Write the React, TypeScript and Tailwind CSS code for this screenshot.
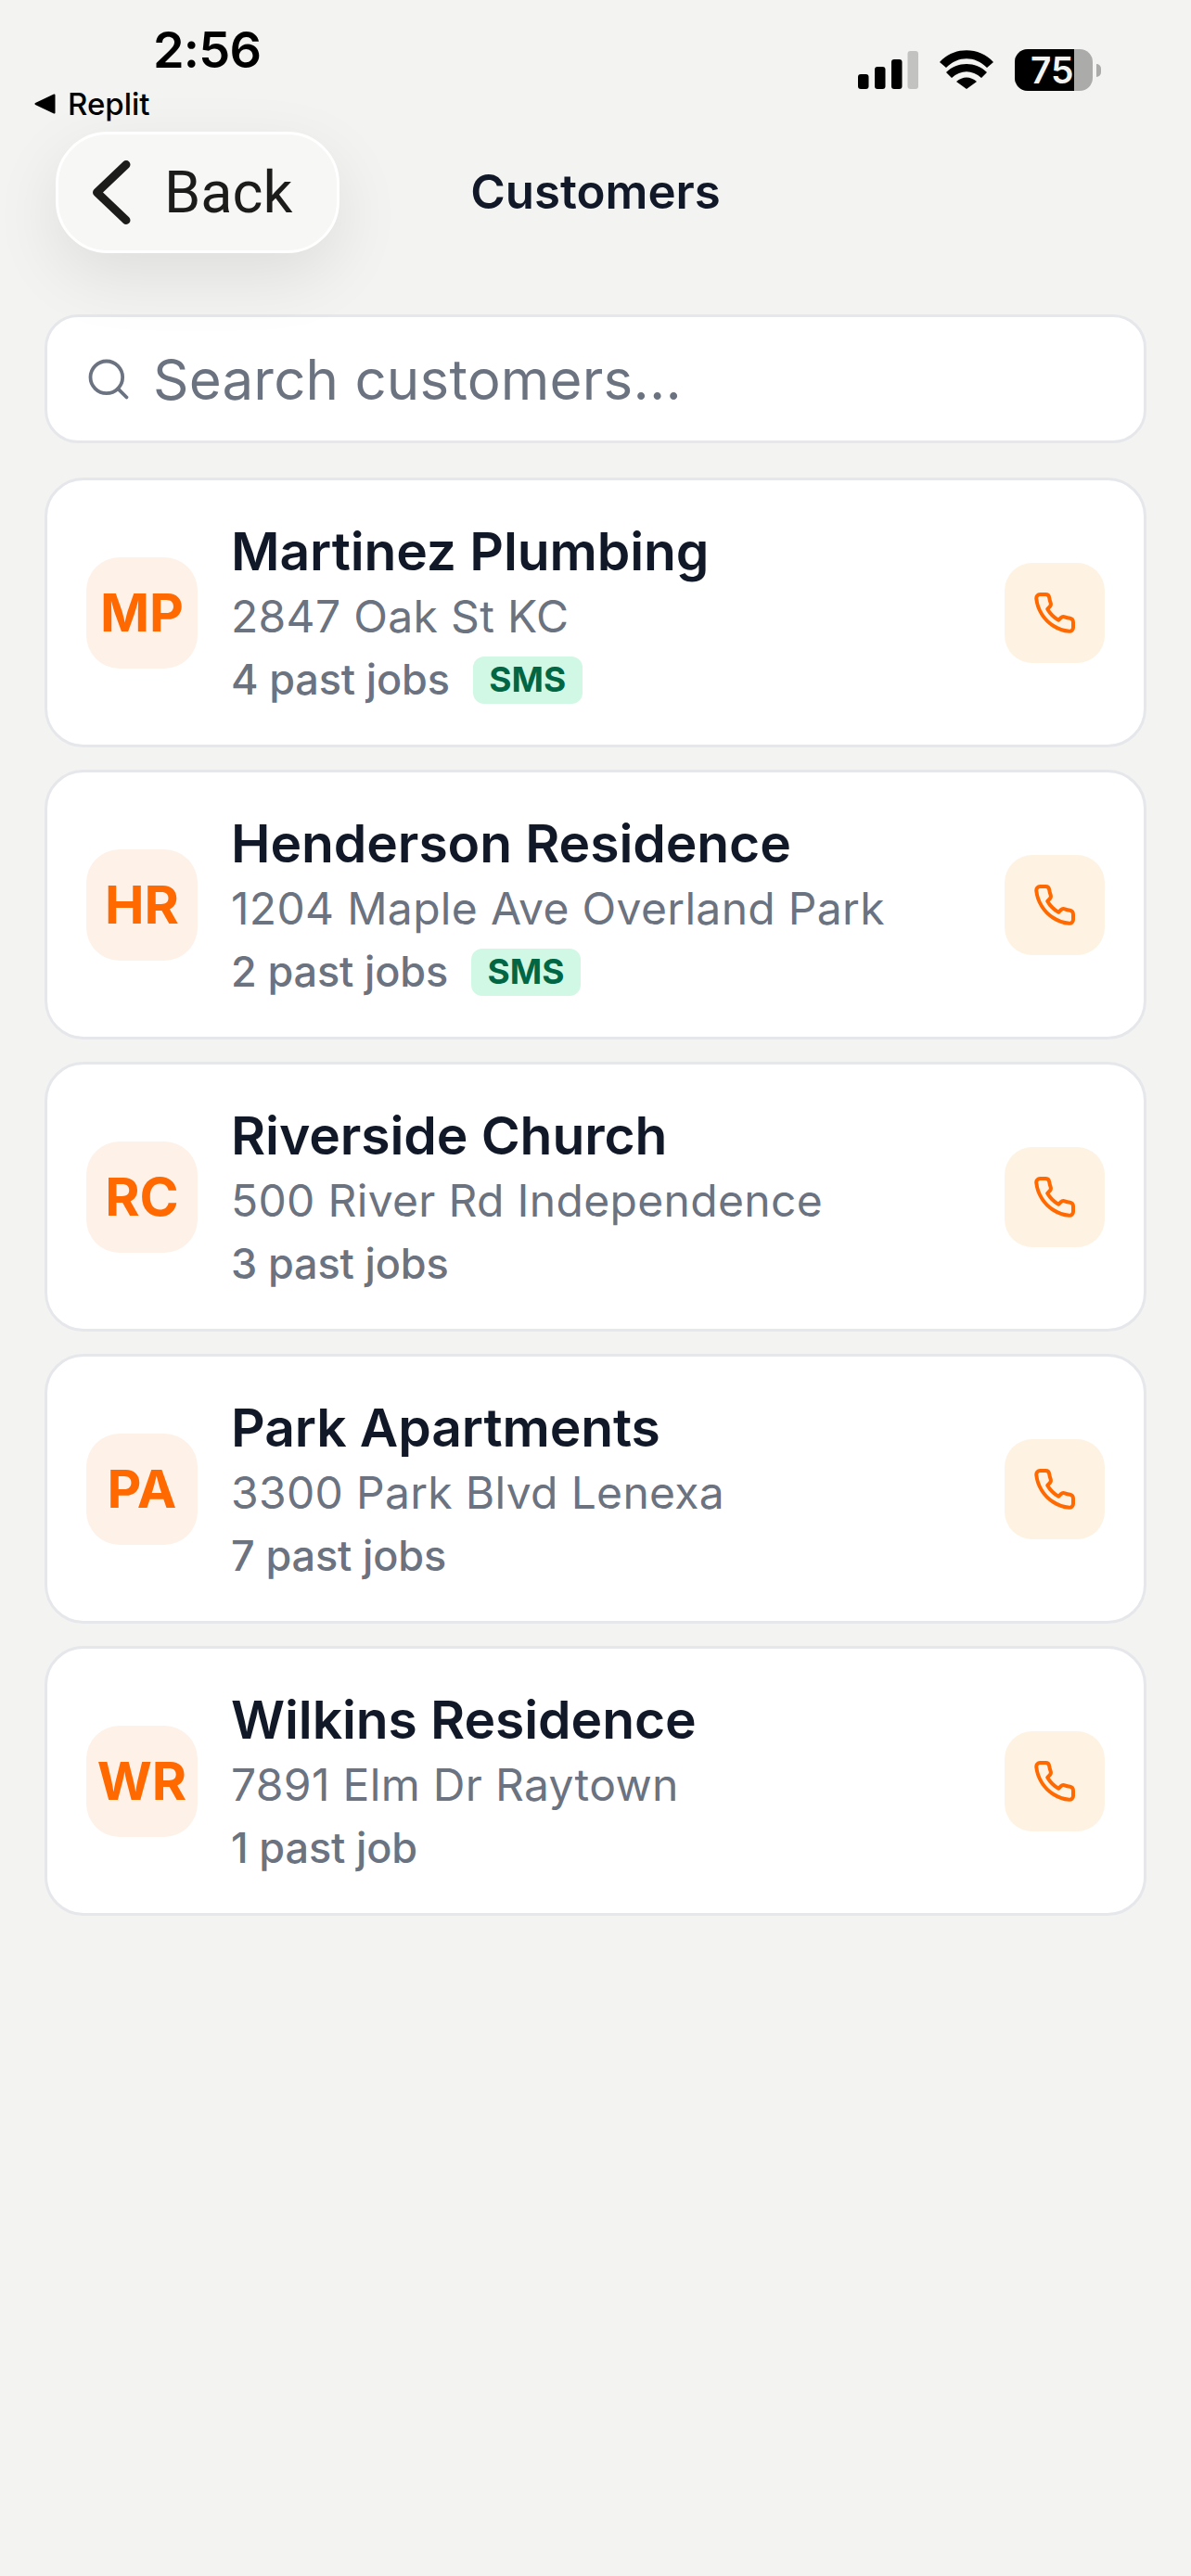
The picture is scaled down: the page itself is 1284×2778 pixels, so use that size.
import { Search } from "lucide-react";
import { FiPhone } from "react-icons/fi";

const customers = [
  { i: "MP", n: "Martinez Plumbing", a: "2847 Oak St KC", j: "4 past jobs", s: true },
  { i: "HR", n: "Henderson Residence", a: "1204 Maple Ave Overland Park", j: "2 past jobs", s: true },
  { i: "RC", n: "Riverside Church", a: "500 River Rd Independence", j: "3 past jobs", s: false },
  { i: "PA", n: "Park Apartments", a: "3300 Park Blvd Lenexa", j: "7 past jobs", s: false },
  { i: "WR", n: "Wilkins Residence", a: "7891 Elm Dr Raytown", j: "1 past job", s: false },
];

function StatusBar() {
  return (
    <div className="relative h-[132px] font-['Inter',sans-serif] text-black">
      <div className="absolute left-[165px] top-[29px] text-[54px] leading-[50px] font-semibold tracking-[-0.8px]">2:56</div>
      <div className="absolute left-[37px] top-[95px] flex items-center gap-[13px]">
        <svg width="23" height="22" viewBox="0 0 23 22"><path d="M21.5 1.5 L1.5 11 L21.5 20.5 Z" fill="#000" stroke="#000" strokeWidth="2" strokeLinejoin="round" /></svg>
        <span className="text-[33px] leading-[34px] font-medium">Replit</span>
      </div>
      <svg className="absolute left-[925px] top-[55px]" width="65" height="41" viewBox="0 0 65 41">
        <rect x="0" y="25" width="11.5" height="16" rx="3" fill="#000" />
        <rect x="18" y="17" width="11.5" height="24" rx="3" fill="#000" />
        <rect x="36" y="9" width="11.5" height="32" rx="3" fill="#000" />
        <rect x="53.5" y="0" width="11.5" height="41" rx="3" fill="#c2c2c0" />
      </svg>
      <svg className="absolute left-[1013px] top-[54px]" width="58" height="42" viewBox="0 0 58 42">
        <path d="M0 13 C15 -4 43 -4 58 13 L51 19 C38 6 20 6 7 19 Z" fill="#000" />
        <path d="M7 24 C19 12 39 12 51 24 L45 30 C35 21 23 21 13 30 Z" fill="#000" />
        <path d="M18 34 C25 28 33 28 40 34 L29 42 Z" fill="#000" />
      </svg>
      <div className="absolute left-[1094px] top-[53px] flex items-center">
        <div className="relative w-[84px] h-[45px] rounded-[14px] bg-[#ababa9] overflow-hidden">
          <div className="absolute left-0 top-0 bottom-0 w-[64px] bg-black" />
          <div className="absolute inset-0 pl-[17px] flex items-center text-[39px] leading-none font-semibold text-[#f3f3f1]">75</div>
        </div>
        <div className="ml-[4px] w-[5px] h-[14px] rounded-r-full bg-[#ababa9]" />
      </div>
    </div>
  );
}

export default function App() {
  return (
    <div className="w-[1284px] h-[2778px] bg-[#f3f3f1] font-['Inter',sans-serif] overflow-hidden">
      <StatusBar />
      <div className="relative h-[207px] flex justify-center pt-[44px]">
        <div className="absolute left-[60px] top-[10px] w-[306px] h-[131px] rounded-[56px] bg-[#f7f7f5] border-[3px] border-white shadow-[0_24px_72px_rgba(0,0,0,0.09)] flex items-center pl-[37px] gap-[36px]">
          <svg width="41" height="69" viewBox="0 0 41 69" fill="none"><path d="M36 4.5 L4.5 34.5 L36 64.5" stroke="#1c1c1a" strokeWidth="9" strokeLinecap="round" strokeLinejoin="round" /></svg>
          <span className="text-[63px] leading-none text-[#1c1c1a] font-normal font-['Roboto',sans-serif]">Back</span>
        </div>
        <div className="text-[51px] leading-[62px] font-semibold text-[#111827]">Customers</div>
      </div>
      <div className="px-[48px]">
        <div className="h-[139px] rounded-[36px] border-[3px] border-[#e5e7eb] bg-white flex items-center pl-[40px] gap-[22px]">
          <Search className="w-[52px] h-[52px] text-[#6b7280]" strokeWidth={1.75} />
          <span className="text-[60px] leading-none text-[#6b7280] tracking-[0.2px]">Search customers...</span>
        </div>
        <div className="mt-[37px] flex flex-col gap-[24px]">
          {customers.map((c) => (
            <div key={c.i} className="h-[291px] rounded-[42px] border-[3px] border-[#e5e7eb] bg-white flex items-center pl-[42px] pr-[42px]">
              <div className="w-[120px] h-[120px] rounded-[36px] bg-[#fef1e8] flex items-center justify-center text-[57px] font-bold text-[#ff6900] shrink-0">{c.i}</div>
              <div className="ml-[36px] flex-1 min-w-0 pt-[6px]">
                <div className="text-[57px] leading-[70px] font-semibold text-[#111827] tracking-[-0.1px]">{c.n}</div>
                <div className="text-[48px] leading-[69px] text-[#6b7280] tracking-[0.32px]">{c.a}</div>
                <div className="flex items-center gap-[25px] h-[68px]">
                  <span className="text-[45px] leading-[68px] font-medium text-[#6b7280] tracking-[-0.15px]">{c.j}</span>
                  {c.s && <span className="h-[51px] w-[118px] justify-center rounded-[12px] bg-[#d0f8e4] text-[#016644] text-[37px] font-bold flex items-center">SMS</span>}
                </div>
              </div>
              <div className="w-[108px] h-[108px] rounded-[30px] bg-[#fef3e2] flex items-center justify-center shrink-0">
                <FiPhone className="w-[48px] h-[48px] text-[#ff6900]" />
              </div>
            </div>
          ))}
        </div>
      </div>
    </div>
  );
}
